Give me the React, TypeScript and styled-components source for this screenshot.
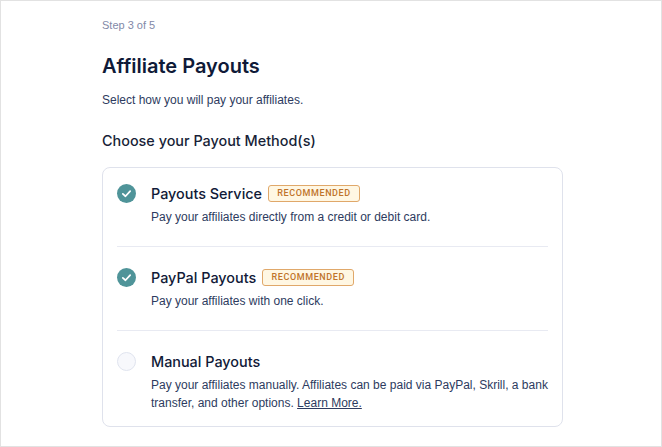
import React from 'react'
import styled, { createGlobalStyle } from 'styled-components'

const GlobalStyle = createGlobalStyle`
  html, body {
    margin: 0;
    padding: 0;
    background: #fff;
  }
  * {
    box-sizing: border-box;
  }
`

const Page = styled.div`
  width: 662px;
  height: 447px;
  overflow: hidden;
  padding: 18px 98px 0 101px;
  border: 1px solid #e2e2e2;
  font-family: "Liberation Sans", Arial, sans-serif;
  color: #0f1a38;
`

const StepLabel = styled.div`
  font-size: 11px;
  line-height: 13px;
  color: #8289a8;
`

const Title = styled.h1`
  margin: 21px 0 0;
  font-family: Inter, "Liberation Sans", sans-serif;
  font-size: 20px;
  line-height: 26px;
  font-weight: 600;
`

const Intro = styled.p`
  margin: 13px 0 0;
  font-size: 12px;
  line-height: 16px;
  color: #2d3b60;
`

const SectionTitle = styled.h2`
  margin: 23px 0 0;
  font-family: Inter, "Liberation Sans", sans-serif;
  font-size: 14.4px;
  line-height: 20px;
  font-weight: 500;
  color: #181f38;
`

const Card = styled.div`
  margin-top: 16px;
  height: 260px;
  padding: 0 14px;
  border: 1px solid #dfe2ec;
  border-radius: 8px;
`

const Option = styled.div<{ $height: number }>`
  display: flex;
  gap: 15px;
  height: ${({ $height }) => $height}px;
  padding-top: 15px;
  & + & {
    padding-top: 20px;
    border-top: 1px solid #e8eaf2;
  }
`

const Check = styled.span<{ $on?: boolean }>`
  flex: none;
  display: flex;
  align-items: center;
  justify-content: center;
  width: 19px;
  height: 19px;
  margin-top: 1px;
  border-radius: 50%;
  background: ${({ $on }) => ($on ? '#4f9499' : '#f7f8fc')};
  border: ${({ $on }) => ($on ? 'none' : '1px solid #e0e4ef')};
`

const Body = styled.div`
  flex: 1;
`

const OptionHead = styled.div`
  display: flex;
  align-items: center;
  gap: 6px;
  height: 20px;
`

const OptionName = styled.span`
  font-family: Inter, "Liberation Sans", sans-serif;
  font-size: 14.4px;
  font-weight: 500;
  color: #111a38;
`

const Badge = styled.span`
  display: inline-flex;
  align-items: center;
  justify-content: center;
  width: 92px;
  height: 17px;
  background: #fff7e3;
  border: 1px solid #e0a86a;
  border-radius: 3px;
  font-family: Roboto, sans-serif;
  font-size: 9px;
  font-weight: 500;
  letter-spacing: 0.6px;
  color: #c0742a;
`

const Description = styled.p`
  margin: 5px 0 0;
  font-size: 12px;
  line-height: 18px;
  color: #2d3b60;
`

const LearnMore = styled.a`
  color: #2d3b60;
  text-decoration: underline;
`

const Tick = () => (
  <svg width="11" height="11" viewBox="0 0 12 12" fill="none">
    <path d="M2 6.4 4.9 9 10 3.4" stroke="#fff" strokeWidth="1.9" strokeLinecap="round" strokeLinejoin="round" />
  </svg>
)

const App = () => (
  <Page>
    <GlobalStyle />
    <StepLabel>Step 3 of 5</StepLabel>
    <Title>Affiliate Payouts</Title>
    <Intro>Select how you will pay your affiliates.</Intro>
    <SectionTitle>Choose your Payout Method(s)</SectionTitle>
    <Card>
      <Option $height={78}>
        <Check $on><Tick /></Check>
        <Body>
          <OptionHead>
            <OptionName>Payouts Service</OptionName>
            <Badge>RECOMMENDED</Badge>
          </OptionHead>
          <Description>Pay your affiliates directly from a credit or debit card.</Description>
        </Body>
      </Option>
      <Option $height={84}>
        <Check $on><Tick /></Check>
        <Body>
          <OptionHead>
            <OptionName>PayPal Payouts</OptionName>
            <Badge>RECOMMENDED</Badge>
          </OptionHead>
          <Description>Pay your affiliates with one click.</Description>
        </Body>
      </Option>
      <Option $height={96}>
        <Check />
        <Body>
          <OptionHead>
            <OptionName>Manual Payouts</OptionName>
          </OptionHead>
          <Description>
            Pay your affiliates manually. Affiliates can be paid via PayPal, Skrill, a bank transfer, and other options.{' '}
            <LearnMore href="#">Learn More.</LearnMore>
          </Description>
        </Body>
      </Option>
    </Card>
  </Page>
)

export default App
